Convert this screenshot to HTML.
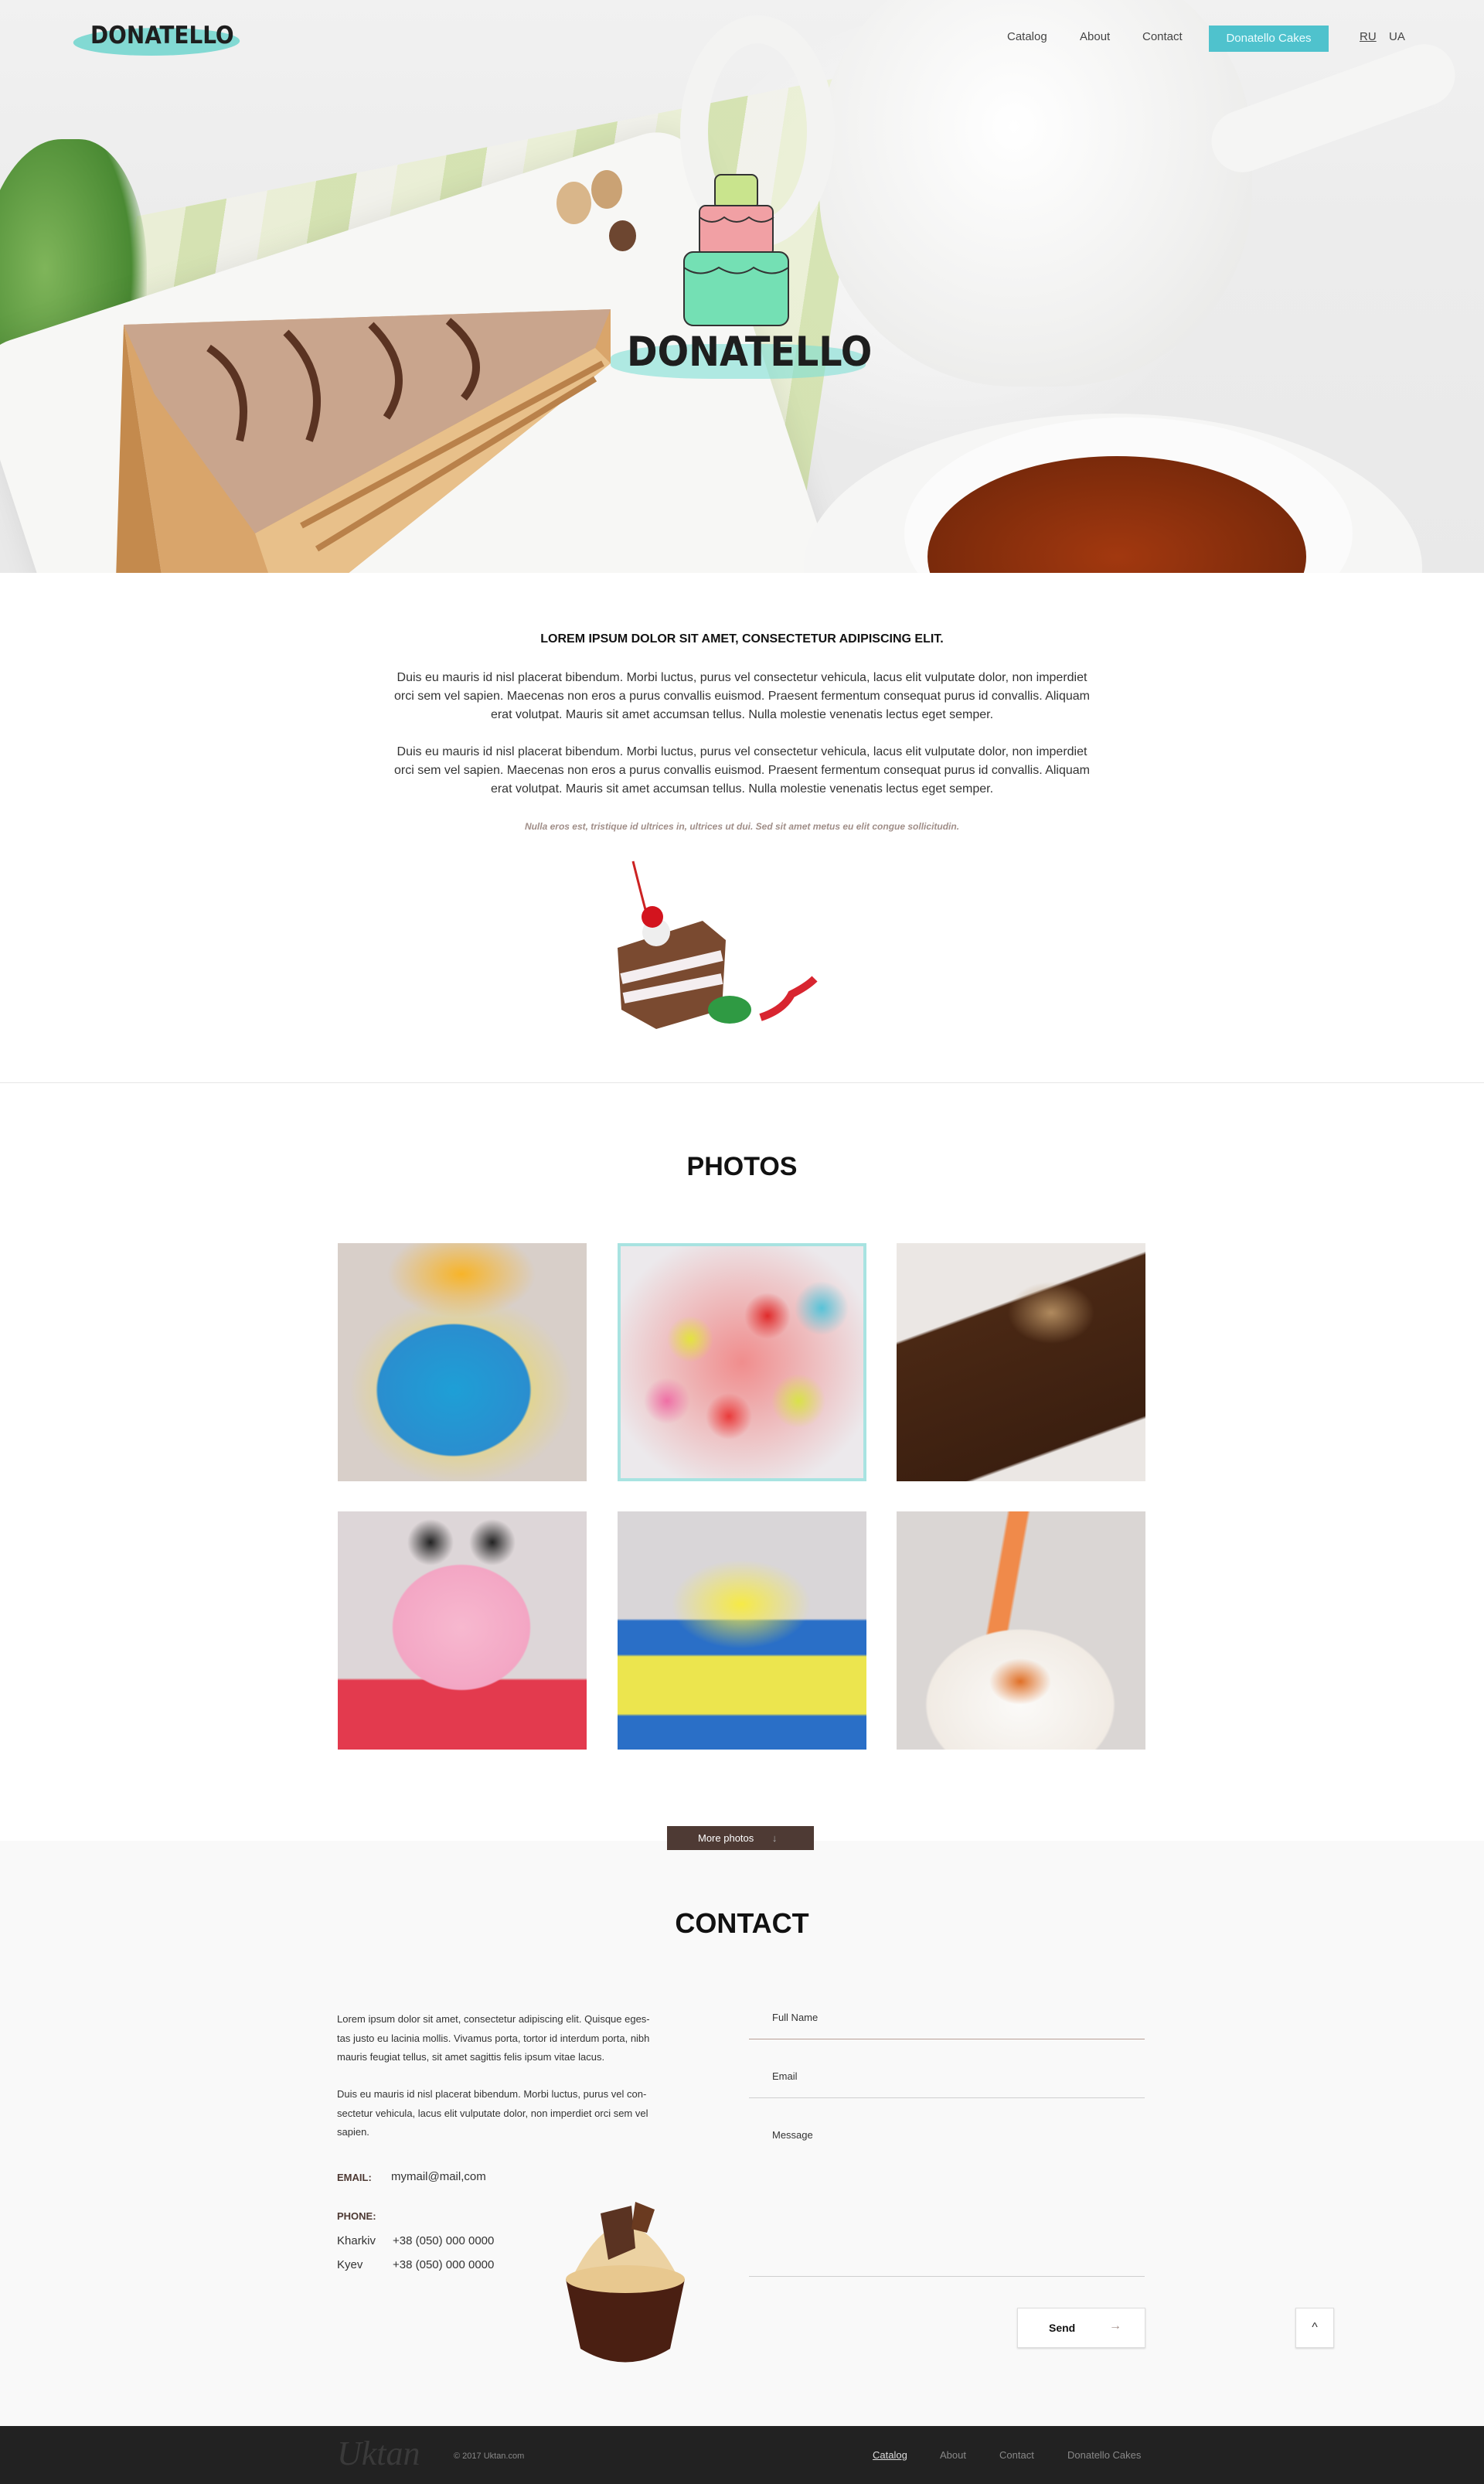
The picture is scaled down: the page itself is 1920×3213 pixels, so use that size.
<!DOCTYPE html>
<html><head><meta charset="utf-8">
<style>
*{margin:0;padding:0;box-sizing:border-box}
body{width:1920px;height:3213px;position:relative;font-family:"Liberation Sans",sans-serif;color:#222;background:#fff;overflow:hidden}
.abs{position:absolute}
#hero{left:0;top:0;width:1920px;height:741px;overflow:hidden;
background:radial-gradient(ellipse 500px 420px at 1230px 300px,#fdfdfd,rgba(245,245,245,0) 70%),linear-gradient(180deg,#f1f1f1,#ececec 40%,#e9e9e9)}
.nav{font-size:15px;color:#444;top:39px}
.btn{left:1564px;top:33px;width:155px;height:34px;background:#4fc2cd;color:#eafcff;font-size:15px;text-align:center;line-height:34px}
.logo{font-family:"DejaVu Sans Condensed","Liberation Sans",sans-serif;font-weight:bold;color:#1e1e1e;letter-spacing:0px}
.p{font-size:16px;line-height:24px;color:#333;text-align:center;white-space:nowrap}
.tile{width:322px;height:308px;overflow:hidden}
.lbl{font-size:13px;color:#333}
.line{height:1px;background:#cfcfcf}
</style></head><body>
<div id="hero" class="abs">
  <div class="abs" style="left:160px;top:180px;width:900px;height:560px;transform:skewX(-20deg) rotate(-12deg);background:repeating-linear-gradient(90deg,#e9efd0 0 60px,#cfe0a4 60px 110px,#f2f2ea 110px 160px);opacity:.8"></div>
  <div class="abs" style="left:-30px;top:180px;width:220px;height:420px;border-radius:50% 40% 50% 50%;background:radial-gradient(ellipse at 40% 40%,#7fb55a,#4a8a33 60%,rgba(74,138,51,0) 72%)"></div>
  <div class="abs" style="left:40px;top:290px;width:980px;height:700px;background:#f7f7f5;border-radius:60px;transform:rotate(-18deg);box-shadow:0 0 40px rgba(0,0,0,.08)"></div>
  <div class="abs" style="left:720px;top:235px;width:45px;height:55px;border-radius:50%;background:#d9b68a"></div>
  <div class="abs" style="left:765px;top:220px;width:40px;height:50px;border-radius:50%;background:#caa274"></div>
  <div class="abs" style="left:788px;top:285px;width:35px;height:40px;border-radius:50%;background:#6d4630"></div>
  <svg class="abs" style="left:150px;top:390px" width="660" height="360" viewBox="0 0 660 360">
    <polygon points="10,30 640,10 640,80 290,360 60,360" fill="#d9a56b"/>
    <polygon points="10,30 640,10 620,60 180,300 50,120" fill="#c9a58d"/>
    <path d="M120,60 q60,40 40,120 M220,40 q60,60 30,140 M330,30 q60,60 20,120 M430,25 q60,50 20,100" stroke="#5a3322" stroke-width="10" fill="none"/>
    <polygon points="180,300 620,60 640,80 290,360 200,360" fill="#e8c08a"/>
    <path d="M260,320 L620,100 M240,290 L630,80" stroke="#b9814a" stroke-width="8"/>
    <polygon points="10,30 60,360 0,360" fill="#c48a4d"/>
  </svg>
  <div class="abs" style="left:1060px;top:-60px;width:560px;height:560px;border-radius:45%;background:radial-gradient(ellipse at 45% 40%,#fff,#f0f0ef 60%,#e4e4e2)"></div>
  <div class="abs" style="left:880px;top:20px;width:200px;height:300px;border:36px solid #f3f3f2;border-radius:50%"></div>
  <div class="abs" style="left:1560px;top:100px;width:330px;height:80px;background:#f5f5f4;transform:rotate(-20deg);border-radius:40px"></div>
  <div class="abs" style="left:1040px;top:535px;width:800px;height:400px;border-radius:50%;background:#f6f6f5"></div>
  <div class="abs" style="left:1170px;top:540px;width:580px;height:300px;border-radius:50%;background:#fbfbfb"></div>
  <div class="abs" style="left:1200px;top:590px;width:490px;height:260px;border-radius:50%;background:radial-gradient(ellipse at 50% 50%,#a2380f,#7a2a0b 70%)"></div>
  <div class="abs" style="left:95px;top:36px;width:215px;height:36px;background:#66d3cc;border-radius:50%;opacity:.8;transform:skewX(-20deg)"></div>
  <div class="abs logo" style="left:117px;top:28px;font-size:31px">DONATELLO</div>
  <svg class="abs" style="left:880px;top:211px" width="145" height="215" viewBox="0 0 145 215">
    <rect x="45" y="15" width="55" height="45" rx="8" fill="#c9e48d" stroke="#333" stroke-width="2"/>
    <rect x="25" y="55" width="95" height="65" rx="8" fill="#f1a0a4" stroke="#333" stroke-width="2"/>
    <rect x="5" y="115" width="135" height="95" rx="12" fill="#74e0b4" stroke="#333" stroke-width="2"/>
    <path d="M5,135 q20,15 45,0 q25,15 45,0 q25,15 45,0 M25,70 q16,12 32,0 q16,12 32,0 q16,12 32,0" stroke="#333" stroke-width="2" fill="none"/>
  </svg>
  <div class="abs" style="left:790px;top:445px;width:330px;height:45px;background:#7fe0d6;opacity:.6;border-radius:40%"></div>
  <div class="abs logo" style="left:811px;top:425px;font-size:53px">DONATELLO</div>
  <div class="abs nav" style="left:1303px">Catalog</div>
  <div class="abs nav" style="left:1397px">About</div>
  <div class="abs nav" style="left:1478px">Contact</div>
  <div class="abs btn">Donatello Cakes</div>
  <div class="abs nav" style="left:1759px;text-decoration:underline">RU</div>
  <div class="abs nav" style="left:1797px">UA</div>
</div>

<div class="abs" style="left:0;top:818px;width:1920px;text-align:center;font-weight:bold;font-size:16px;color:#111">LOREM IPSUM DOLOR SIT AMET, CONSECTETUR ADIPISCING ELIT.</div>
<div class="abs p" style="left:0;top:865px;width:1920px">Duis eu mauris id nisl placerat bibendum. Morbi luctus, purus vel consectetur vehicula, lacus elit vulputate dolor, non imperdiet<br>orci sem vel sapien. Maecenas non eros a purus convallis euismod. Praesent fermentum consequat purus id convallis. Aliquam<br>erat volutpat. Mauris sit amet accumsan tellus. Nulla molestie venenatis lectus eget semper.</div>
<div class="abs p" style="left:0;top:961px;width:1920px">Duis eu mauris id nisl placerat bibendum. Morbi luctus, purus vel consectetur vehicula, lacus elit vulputate dolor, non imperdiet<br>orci sem vel sapien. Maecenas non eros a purus convallis euismod. Praesent fermentum consequat purus id convallis. Aliquam<br>erat volutpat. Mauris sit amet accumsan tellus. Nulla molestie venenatis lectus eget semper.</div>
<div class="abs" style="left:0;top:1062px;width:1920px;text-align:center;font-size:12px;font-style:italic;font-weight:bold;color:#a08e88">Nulla eros est, tristique id ultrices in, ultrices ut dui. Sed sit amet metus eu elit congue sollicitudin.</div>
<svg class="abs" style="left:789px;top:1106px" width="310" height="230" viewBox="0 0 310 230">
  <path d="M30,8 q10,40 18,70" stroke="#c22" stroke-width="3" fill="none"/>
  <polygon points="10,120 120,85 150,110 145,200 60,225 15,200" fill="#7a4a30"/>
  <path d="M15,160 L145,130 M18,185 L145,160" stroke="#f4eef0" stroke-width="14"/>
  <circle cx="60" cy="100" r="18" fill="#eee"/>
  <circle cx="55" cy="80" r="14" fill="#d3141e"/>
  <ellipse cx="155" cy="200" rx="28" ry="18" fill="#2f9a43"/>
  <path d="M195,210 q30,-10 40,-30 q20,-10 30,-20" stroke="#d82530" stroke-width="10" fill="none"/>
</svg>
<div class="abs" style="left:0;top:1400px;width:1920px;height:1px;background:#e6e6e6"></div>

<div class="abs" style="left:0;top:1490px;width:1920px;text-align:center;font-weight:bold;font-size:34px;color:#111">PHOTOS</div>
<div class="abs tile" style="left:437px;top:1608px;background:radial-gradient(ellipse 120px 70px at 160px 40px,#f7b429,rgba(0,0,0,0) 80%),radial-gradient(ellipse 140px 120px at 150px 190px,#1e9fd6,#2a8ecf 70%,rgba(0,0,0,0) 72%),radial-gradient(ellipse 200px 170px at 160px 190px,#f0dc3a,rgba(0,0,0,0) 72%),#d8cfc9"></div>
<div class="abs tile" style="left:799px;top:1608px;border:4px solid #a8e3e1;background:radial-gradient(circle 30px at 90px 120px,#e3e33f,rgba(0,0,0,0)),radial-gradient(circle 30px at 190px 90px,#e02b2b,rgba(0,0,0,0)),radial-gradient(circle 35px at 230px 200px,#d9e24a,rgba(0,0,0,0)),radial-gradient(circle 30px at 140px 220px,#ea3b3b,rgba(0,0,0,0)),radial-gradient(circle 30px at 60px 200px,#ef6fa5,rgba(0,0,0,0)),radial-gradient(circle 35px at 260px 80px,#57c3d8,rgba(0,0,0,0)),radial-gradient(ellipse at 50% 50%,#f08d8d,#ece9ec 80%)"></div>
<div class="abs tile" style="left:1160px;top:1608px;background:radial-gradient(ellipse 70px 50px at 200px 90px,#b08a5e,rgba(0,0,0,0) 80%),linear-gradient(160deg,rgba(0,0,0,0) 30%,#4a2814 31%,#3b1f10 80%,rgba(0,0,0,0) 81%),#ebe7e4"></div>
<div class="abs tile" style="left:437px;top:1955px;background:radial-gradient(circle 30px at 120px 40px,#222,rgba(0,0,0,0)),radial-gradient(circle 30px at 200px 40px,#222,rgba(0,0,0,0)),radial-gradient(ellipse 110px 100px at 160px 150px,#f7b8cf,#f3a6c4 80%,rgba(0,0,0,0) 82%),linear-gradient(180deg,rgba(0,0,0,0) 70%,#e33a4e 71%),#ddd6d8"></div>
<div class="abs tile" style="left:799px;top:1955px;background:radial-gradient(ellipse 110px 70px at 160px 120px,#f6ea46,rgba(0,0,0,0) 82%),linear-gradient(180deg,rgba(0,0,0,0) 45%,#2a6fc7 46%,#2a6fc7 60%,#ece54e 61%,#ece54e 85%,#2a6fc7 86%),#d9d6d8"></div>
<div class="abs tile" style="left:1160px;top:1955px;background:radial-gradient(ellipse 40px 30px at 160px 220px,#e07027,rgba(0,0,0,0)),radial-gradient(ellipse 150px 120px at 160px 250px,#fbfaf8,#f1ebe4 80%,rgba(0,0,0,0) 82%),linear-gradient(100deg,rgba(0,0,0,0) 38%,#f08a4a 39%,#f08a4a 45%,rgba(0,0,0,0) 46%),#dad6d4"></div>

<div class="abs" style="left:0;top:2381px;width:1920px;height:757px;background:#f9f9f9"></div>
<div class="abs" style="left:863px;top:2362px;width:190px;height:31px;background:#4e3a34;color:#fff;font-size:13px;line-height:31px;padding-left:40px">More photos <span style="margin-left:20px;color:#aaa">↓</span></div>
<div class="abs" style="left:0;top:2467px;width:1920px;text-align:center;font-weight:bold;font-size:36px;color:#111">CONTACT</div>
<div class="abs" style="left:436px;top:2600px;width:480px;font-size:13px;line-height:24.5px;color:#333;white-space:nowrap">Lorem ipsum dolor sit amet, consectetur adipiscing elit. Quisque eges-<br>tas justo eu lacinia mollis. Vivamus porta, tortor id interdum porta, nibh<br>mauris feugiat tellus, sit amet sagittis felis ipsum vitae lacus.</div>
<div class="abs" style="left:436px;top:2697px;width:480px;font-size:13px;line-height:24.5px;color:#333;white-space:nowrap">Duis eu mauris id nisl placerat bibendum. Morbi luctus, purus vel con-<br>sectetur vehicula, lacus elit vulputate dolor, non imperdiet orci sem vel<br>sapien.</div>
<div class="abs" style="left:436px;top:2809px;font-size:13px;font-weight:bold;color:#4e3a34">EMAIL:</div>
<div class="abs" style="left:506px;top:2807px;font-size:15px;color:#333">mymail@mail,com</div>
<div class="abs" style="left:436px;top:2859px;font-size:13px;font-weight:bold;color:#4e3a34">PHONE:</div>
<div class="abs" style="left:436px;top:2890px;font-size:15px;color:#333">Kharkiv</div>
<div class="abs" style="left:508px;top:2890px;font-size:15px;color:#333">+38 (050) 000 0000</div>
<div class="abs" style="left:436px;top:2921px;font-size:15px;color:#333">Kyev</div>
<div class="abs" style="left:508px;top:2921px;font-size:15px;color:#333">+38 (050) 000 0000</div>
<svg class="abs" style="left:727px;top:2848px" width="164" height="212" viewBox="0 0 164 212">
  <path d="M5,100 L159,100 L140,190 Q82,225 24,190 Z" fill="#4a1f12"/>
  <path d="M10,105 q70,-150 144,0 Z" fill="#ecd2a2"/>
  <ellipse cx="82" cy="100" rx="77" ry="18" fill="#e8c88f"/>
  <polygon points="50,15 90,5 95,60 60,75" fill="#5a3322"/>
  <polygon points="95,0 120,10 110,40 90,35" fill="#6a3a20"/>
</svg>
<div class="abs lbl" style="left:999px;top:2602px">Full Name</div>
<div class="abs line" style="left:969px;top:2637px;width:512px;background:#b99f95"></div>
<div class="abs lbl" style="left:999px;top:2678px">Email</div>
<div class="abs line" style="left:969px;top:2713px;width:512px"></div>
<div class="abs lbl" style="left:999px;top:2754px">Message</div>
<div class="abs line" style="left:969px;top:2944px;width:512px"></div>
<div class="abs" style="left:1316px;top:2985px;width:166px;height:52px;border:1px solid #ddd;background:#fff;box-shadow:0 1px 2px rgba(0,0,0,.15)"><span style="position:absolute;left:40px;top:17px;font-size:14px;font-weight:bold;color:#111">Send</span><span style="position:absolute;left:118px;top:14px;font-size:16px;color:#a08e88">→</span></div>
<div class="abs" style="left:1676px;top:2985px;width:50px;height:52px;border:1px solid #ddd;background:#fff;text-align:center;line-height:50px;font-size:16px;color:#333;box-shadow:0 1px 2px rgba(0,0,0,.15)">^</div>

<div class="abs" style="left:0;top:3138px;width:1920px;height:75px;background:#222"></div>
<div class="abs" style="left:436px;top:3148px;font-family:'Liberation Serif',serif;font-style:italic;font-size:44px;color:#3a3a3a">Uktan</div>
<div class="abs" style="left:587px;top:3171px;font-size:11px;color:#888">© 2017 Uktan.com</div>
<div class="abs" style="left:1129px;top:3168px;font-size:13px;color:#ddd;text-decoration:underline">Catalog</div>
<div class="abs" style="left:1216px;top:3168px;font-size:13px;color:#888">About</div>
<div class="abs" style="left:1293px;top:3168px;font-size:13px;color:#888">Contact</div>
<div class="abs" style="left:1381px;top:3168px;font-size:13px;color:#888">Donatello Cakes</div>
</body></html>
